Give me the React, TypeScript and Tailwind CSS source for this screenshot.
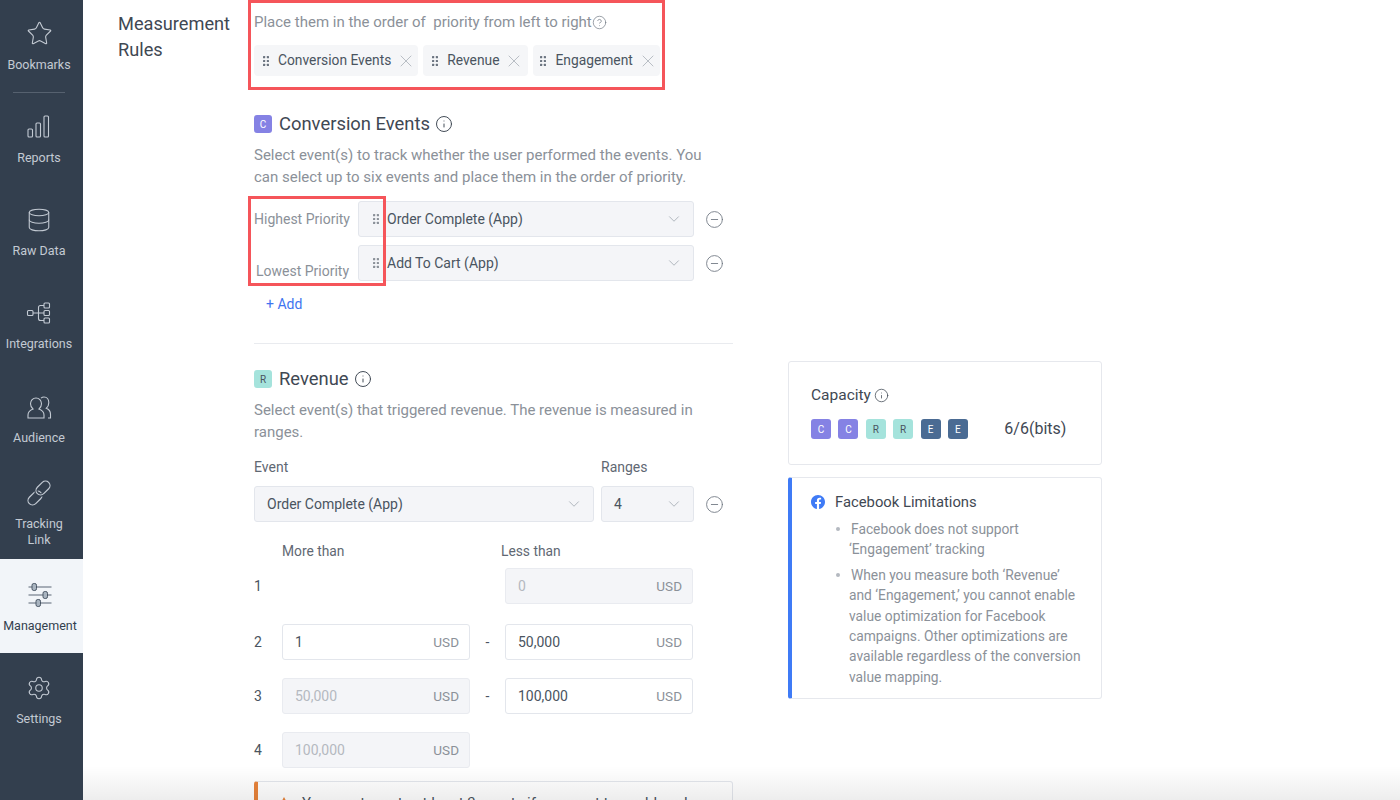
import { Star, Database, Settings, X, Info, CircleHelp, ChevronDown, CircleMinus } from 'lucide-react';

const navItems = [
  { label: 'Reports', icon: <ReportsIcon />, className: 'h-[93.300px]' },
  { label: 'Raw Data', icon: <Database size={26} strokeWidth={1} />, className: 'h-[93.300px]' },
  { label: 'Integrations', icon: <IntegrationsIcon />, className: 'h-[93.300px]' },
  { label: 'Audience', icon: <AudienceIcon />, className: 'h-[93.300px]' },
  { label: 'Tracking Link', icon: <LinkIcon />, className: 'h-[93.300px] pt-[3px]' },
];

function ReportsIcon() {
  return (
    <svg width="26" height="26" viewBox="0 0 26 26" fill="none" stroke="currentColor" strokeWidth="1.1">
      <rect x="2" y="15" width="4.5" height="8" rx="1" />
      <rect x="10" y="9" width="4.5" height="14" rx="1" />
      <rect x="18" y="2" width="4.5" height="21" rx="1" />
    </svg>
  );
}

function IntegrationsIcon() {
  return (
    <svg width="26" height="26" viewBox="0 0 26 26" fill="none" stroke="currentColor" strokeWidth="1.1">
      <rect x="1.5" y="10.5" width="5.5" height="5" rx="1" />
      <rect x="18" y="3" width="5.5" height="5" rx="1" />
      <rect x="18" y="10.5" width="5.5" height="5" rx="1" />
      <rect x="18" y="18" width="5.5" height="5" rx="1" />
      <path d="M7 13h11M12.5 13V7.500q0-2 2-2H18M12.5 13v5.500q0 2 2 2H18" />
    </svg>
  );
}

function AudienceIcon() {
  return (
    <svg width="26" height="26" viewBox="0 0 26 26" fill="none" stroke="currentColor" strokeWidth="1.1">
      <path d="M2 24v-3c0-3 2.500-5 5-6-1.500-1.200-2.500-3-2.500-5.200C4.500 6.500 7 4 10 4s5.500 2.500 5.500 5.800c0 2.200-1 4-2.500 5.200 2.500 1 5 3 5 6v3z" />
      <path d="M15 4.200c.9-.8 1.900-1.200 3-1.200 3 0 4.800 2.600 4.800 5.800 0 2.300-1 4.300-2.500 5.500 2.500 1 4.200 3 4.200 6V24h-2.500" />
    </svg>
  );
}

function LinkIcon() {
  return (
    <svg width="28" height="28" viewBox="0 0 28 28" fill="none" strokeWidth="1.2">
      <rect x="2" y="14.500" width="16" height="9" rx="4.500" stroke="currentColor" transform="rotate(-45 10 19)" />
      <rect x="10" y="4.500" width="16" height="9" rx="4.500" stroke="#333f4e" strokeWidth="3.500" transform="rotate(-45 18 9)" />
      <rect x="10" y="4.500" width="16" height="9" rx="4.500" stroke="currentColor" transform="rotate(-45 18 9)" />
    </svg>
  );
}

function SlidersIcon() {
  return (
    <svg width="26" height="26" viewBox="0 0 26 26" fill="none">
      <path d="M1.500 5h23M1.500 13h23M1.500 21h23" stroke="#5b6776" strokeWidth="1.200" />
      <rect x="5" y="1.500" width="4.500" height="7" rx="1.800" fill="#a9b4c0" stroke="#4a5665" />
      <rect x="16" y="9.500" width="4.500" height="7" rx="1.800" fill="#a9b4c0" stroke="#4a5665" />
      <rect x="9" y="17.500" width="4.500" height="7" rx="1.800" fill="#a9b4c0" stroke="#4a5665" />
    </svg>
  );
}

function Grip({ className }: { className?: string }) {
  return (
    <svg width="8" height="12" viewBox="0 0 8 12" fill="currentColor" className={className}>
      <rect x="1" y="1" width="2.200" height="2.200" rx="0.500" />
      <rect x="4.800" y="1" width="2.200" height="2.200" rx="0.500" />
      <rect x="1" y="4.900" width="2.200" height="2.200" rx="0.500" />
      <rect x="4.800" y="4.900" width="2.200" height="2.200" rx="0.500" />
      <rect x="1" y="8.800" width="2.200" height="2.200" rx="0.500" />
      <rect x="4.800" y="8.800" width="2.200" height="2.200" rx="0.500" />
    </svg>
  );
}

function NavItem({ label, icon, active, className }: { label: string; icon: React.ReactNode; active?: boolean; className: string }) {
  return (
    <div className={`flex flex-col items-center justify-center text-center text-[12.500px] leading-[16px] ${className} ${active ? 'bg-[#f2f5f9] pr-[3px] text-[#333f4e]' : 'pr-[5px] text-[#c3cad3]'}`}>
      <div className="mb-[10px] flex h-[26px] items-center justify-center">{icon}</div>
      <span className="px-3">{label}</span>
    </div>
  );
}

function Sidebar() {
  return (
    <div className="h-full w-[83px] shrink-0 bg-[#333f4e]">
      <NavItem label="Bookmarks" icon={<Star size={27} strokeWidth={1} />} className="h-[92px] pt-[1px]" />
      <div className="ml-[13px] h-px w-[52px] bg-[#56616f]" />
      {navItems.map(n => (
        <NavItem key={n.label} label={n.label} icon={n.icon} className={n.className} />
      ))}
      <NavItem label="Management" icon={<SlidersIcon />} active className="h-[93.300px] pt-[3px]" />
      <NavItem label="Settings" icon={<Settings size={26} strokeWidth={1} />} className="h-[93.300px] pt-[3px]" />
    </div>
  );
}

function Chip({ label, className }: { label: string; className: string }) {
  return (
    <div className={`flex h-[31px] items-center rounded bg-[#f5f6f8] text-[13.800px] text-[#4a5460] ${className}`}>
      <Grip className="mr-2 text-[#6b7480]" />
      <span>{label}</span>
      <X size={20} strokeWidth={0.800} className="ml-[5px] text-[#9aa1aa]" />
    </div>
  );
}

function Badge({ letter, kind, size = 'md' }: { letter: string; kind: 'c' | 'r' | 'e'; size?: 'md' | 'sm' }) {
  const colors = { c: 'bg-[#8582e4] text-white', r: 'bg-[#a5e3dc] text-[#4a5460]', e: 'bg-[#4a6b93] text-white' };
  return (
    <span className={`flex items-center justify-center rounded-[3px] text-[10px] ${size === 'md' ? 'h-[20px] w-[20px]' : 'h-[18px] w-[18px]'} ${colors[kind]}`}>
      {letter}
    </span>
  );
}

function SectionTitle({ letter, kind, title }: { letter: string; kind: 'c' | 'r'; title: string }) {
  return (
    <div className="flex h-[24px] items-center text-[18.400px] text-[#3f4853]">
      <Badge letter={letter} kind={kind} size="sm" />
      <span className="ml-[7px]">{title}</span>
      <Info size={18} strokeWidth={1.300} className="ml-[5px]" />
    </div>
  );
}

function PrioritySelect({ label, labelClass, value }: { label: string; labelClass: string; value: string }) {
  return (
    <div className="flex items-center">
      <div className={`w-[104px] text-[14px] text-[#8b9199] ${labelClass}`}>{label}</div>
      <div className="flex h-[36px] w-[336px] items-center rounded-[3px] border border-[#e3e6ec] bg-[#f4f5f8] pl-[13px] pr-[10px] text-[14px] text-[#4a5460]">
        <Grip className="mr-[7px] text-[#8b9199]" />
        <span className="flex-1">{value}</span>
        <ChevronDown size={18} strokeWidth={1} className="text-[#9aa1aa]" />
      </div>
      <CircleMinus size={19} strokeWidth={1.100} className="ml-[11px] text-[#6f7781]" />
    </div>
  );
}

function Select({ value, className }: { value: string; className: string }) {
  return (
    <div className={`flex h-[36px] items-center rounded-[3px] border border-[#e3e6ec] bg-[#f4f5f8] pl-[12px] pr-[10px] text-[14px] text-[#4a5460] ${className}`}>
      <span className="flex-1">{value}</span>
      <ChevronDown size={18} strokeWidth={1} className="text-[#9aa1aa]" />
    </div>
  );
}

function UsdInput({ value, disabled }: { value: string; disabled?: boolean }) {
  return (
    <div className={`flex h-[36px] w-[188px] items-center justify-between rounded-[3px] border pl-[12px] pr-[10px] text-[14px] ${disabled ? 'border-[#e9ebf0] bg-[#f4f5f8] text-[#b4b9c0]' : 'border-[#e3e6ec] bg-white text-[#4a5460]'}`}>
      <span>{value}</span>
      <span className="text-[13.500px] text-[#8b9199]">USD</span>
    </div>
  );
}

function RangeRow({ n, from, to, toDisabled, fromDisabled, className }: {
  n: number; from?: string; to?: string; toDisabled?: boolean; fromDisabled?: boolean; className: string;
}) {
  return (
    <div className={`flex items-center text-[14px] text-[#4a5460] ${className}`}>
      <div className="w-[28px]">{n}</div>
      <div className="w-[188px]">{from && <UsdInput value={from} disabled={fromDisabled} />}</div>
      <div className="w-[35px] text-center">{from && to ? '-' : ''}</div>
      {to && <UsdInput value={to} disabled={toDisabled} />}
    </div>
  );
}

export default function App() {
  return (
    <div className="relative flex h-[800px] w-full overflow-hidden bg-white [font-family:Roboto,sans-serif]">
      <Sidebar />

      <div className="relative flex flex-1">
        <div className="ml-[35px] w-[136px] shrink-0 pt-[11px] text-[18.200px] leading-[26px] text-[#3f4853]">
          Measurement<br />Rules
        </div>

        <div className="relative w-[479px] shrink-0">
          <div className="flex h-[45px] items-center pb-[1px] text-[15px] text-[#8b9199]">
            Place them in the order of&nbsp; priority from left to right
            <CircleHelp size={15} strokeWidth={1.100} className="text-[#6f7781]" />
          </div>
          <div className="flex gap-[5px]">
            <Chip label="Conversion Events" className="pl-2 pr-[2px]" />
            <Chip label="Revenue" className="pl-2 pr-[4px]" />
            <Chip label="Engagement" className="pl-[6px] pr-[2px]" />
          </div>

          <div className="mt-[36px]">
            <SectionTitle letter="C" kind="c" title="Conversion Events" />
          </div>
          <p className="mt-[8px] text-[15px] leading-[22px] text-[#8b9199]">
            Select event(s) to track whether the user performed the events. You<br />
            can select up to six events and place them in the order of priority.
          </p>
          <div className="mt-[13px] flex flex-col gap-[7px]">
            <PrioritySelect label="Highest Priority" labelClass="" value="Order Complete (App)" />
            <PrioritySelect label="Lowest Priority" labelClass="pl-[2px] pt-[17px]" value="Add To Cart (App)" />
          </div>
          <div className="mt-[12px] pl-[12px] text-[14px] leading-[20px] text-[#3f74f0]">+ Add</div>
          <div className="mt-[29px] h-px bg-[#e9ebef]" />

          <div className="mt-[23px]">
            <SectionTitle letter="R" kind="r" title="Revenue" />
          </div>
          <p className="mt-[8px] text-[15px] leading-[22px] text-[#8b9199]">
            Select event(s) that triggered revenue. The revenue is measured in<br />
            ranges.
          </p>
          <div className="mt-[14px] flex text-[14px] leading-[20px] text-[#5f6873]">
            <div className="w-[347px]">Event</div>
            <div>Ranges</div>
          </div>
          <div className="mt-[9px] flex items-center">
            <Select value="Order Complete (App)" className="w-[340px]" />
            <Select value="4" className="ml-[7px] w-[93px]" />
            <CircleMinus size={19} strokeWidth={1.100} className="ml-[11px] text-[#6f7781]" />
          </div>
          <div className="mt-[19px] flex text-[13.800px] leading-[20px] text-[#5f6873]">
            <div className="w-[247px] pl-[28px]">More than</div>
            <div>Less than</div>
          </div>
          <RangeRow n={1} to="0" toDisabled className="mt-[7px]" />
          <RangeRow n={2} from="1" to="50,000" className="mt-[20px]" />
          <RangeRow n={3} from="50,000" fromDisabled to="100,000" className="mt-[18px]" />
          <RangeRow n={4} from="100,000" fromDisabled className="mt-[18px]" />

          <div className="mt-[13px] flex h-[60px] rounded-[3px] border border-[#e3e6ec] border-l-[4px] border-l-[#e8833a] pl-[20px] pt-[11px] text-[15px] leading-[20px] text-[#4a5460]">
            <svg width="12" height="12" viewBox="0 0 12 12" fill="#e8833a" className="mr-[12px] mt-[4px]">
              <path d="M6 0l6 11H0z" />
            </svg>
            You must create at least 3 events if you want to enable value
          </div>
        </div>

        <div className="ml-[55px] w-[314px] shrink-0 pt-[361px]">
          <div className="h-[104px] rounded-[3px] border border-[#e6e8ed] px-[22px] pt-[22px]">
            <div className="flex items-center text-[15.500px] leading-[22px] text-[#3f4853]">
              Capacity
              <Info size={15} strokeWidth={1.200} className="ml-[3px]" />
            </div>
            <div className="mt-[11px] flex items-center gap-[7.400px]">
              <Badge letter="C" kind="c" />
              <Badge letter="C" kind="c" />
              <Badge letter="R" kind="r" />
              <Badge letter="R" kind="r" />
              <Badge letter="E" kind="e" />
              <Badge letter="E" kind="e" />
              <span className="ml-[29px] text-[16px] text-[#3f4853]">6/6(bits)</span>
            </div>
          </div>
          <div className="mt-[12px] h-[222px] rounded-[3px] border border-[#e6e8ed] border-l-[4px] border-l-[#3f7bf6] pl-[19px] pr-[16px] pt-[14px]">
            <div className="flex items-center text-[14.800px] leading-[20px] text-[#3f4853]">
              <svg width="14" height="14" viewBox="0 0 24 24" fill="#3f7bf6">
                <path d="M24 12.070C24 5.400 18.630 0 12 0S0 5.400 0 12.070C0 18.100 4.390 23.100 10.130 24v-8.440H7.080v-3.490h3.050V9.410c0-3.030 1.790-4.700 4.530-4.700 1.310 0 2.680.24 2.680.24v2.970h-1.510c-1.490 0-1.960.93-1.960 1.880v2.270h3.330l-.53 3.490h-2.800V24C19.610 23.100 24 18.100 24 12.070z" />
              </svg>
              <span className="ml-[10px]">Facebook Limitations</span>
            </div>
            <ul className="mt-[7px] pl-[38px] text-[13.800px] leading-[20.400px] text-[#8b9199]">
              <li className="relative">
                <span className="absolute left-[-13px] top-[8px] h-[4px] w-[4px] rounded-full bg-[#b4b9c0]" />
                <span className="ml-[2px]">Facebook does not support</span><br />‘Engagement’ tracking
              </li>
              <li className="relative mt-[5px]">
                <span className="absolute left-[-13px] top-[8px] h-[4px] w-[4px] rounded-full bg-[#b4b9c0]" />
                <span className="ml-[2px]">When you measure both ‘Revenue’</span><br />
                and ‘Engagement,’ you cannot enable<br />
                value optimization for Facebook<br />
                campaigns. Other optimizations are<br />
                available regardless of the conversion<br />
                value mapping.
              </li>
            </ul>
          </div>
        </div>

        <div className="pointer-events-none absolute bottom-0 left-0 right-0 h-[34px] bg-gradient-to-b from-transparent to-black/[0.07]" />
      </div>

      {/* annotation boxes drawn on top of the screenshot */}
      <div className="pointer-events-none absolute left-[248px] top-0 h-[90px] w-[417px] border-[3px] border-[#f5555a]" />
      <div className="pointer-events-none absolute left-[248px] top-[196px] h-[90px] w-[138px] border-[3px] border-[#f5555a]" />
    </div>
  );
}
